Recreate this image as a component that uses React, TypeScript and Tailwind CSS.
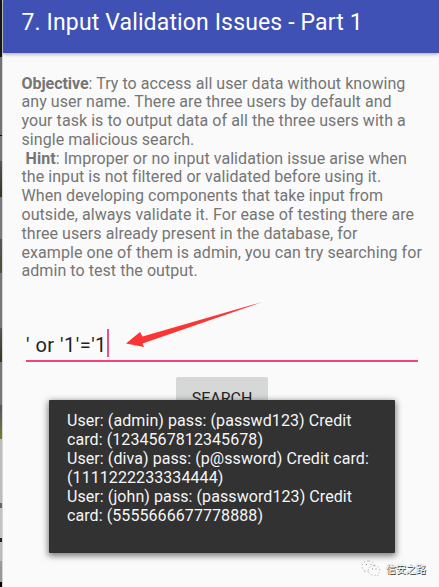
const objective = [
  'any user name. There are three users by default and',
  'your task is to output data of all the three users with a',
  'single malicious search.',
];

const hint = [
  'the input is not filtered or validated before using it.',
  'When developing components that take input from',
  'outside, always validate it. For ease of testing there are',
  'three users already present in the database, for',
  'example one of them is admin, you can try searching for',
  'admin to test the output.',
];

const results = [
  'User: (admin) pass: (passwd123) Credit',
  'card: (1234567812345678)',
  'User: (diva) pass: (p@ssword) Credit card:',
  '(1111222233334444)',
  'User: (john) pass: (password123) Credit',
  'card: (5555666677778888)',
];

function EdgeStrip() {
  return (
    <div className="flex h-full w-[3px] shrink-0 flex-col border-r border-[#d5d5d8] bg-[#777]">
      <div className="h-[57px] bg-[#171719]" />
      <div className="h-[78px] bg-[#737375]" />
      <div className="h-px bg-black" />
      <div className="h-[25px] bg-[#777]" />
      <div className="h-[36px] bg-gradient-to-b from-[#555] to-[#35391f]" />
      <div className="h-[42px] bg-[#79797b]" />
      <div className="h-[34px] bg-gradient-to-b from-[#555] to-[#4c5130]" />
      <div className="h-[55px] bg-[#77777a]" />
      <div className="h-[34px] bg-gradient-to-b from-[#555] to-[#343b20]" />
      <div className="h-[43px] bg-[#77777a]" />
      <div className="h-[34px] bg-gradient-to-b from-[#555] to-[#6d8130]" />
      <div className="h-[64px] bg-[#bdbdbd]" />
      <div className="h-[5px] bg-[#666]" />
      <div className="h-[30px] bg-[#c4c4c4]" />
      <div className="h-[4px] bg-[#222]" />
      <div className="h-[19px] bg-[#bbb]" />
      <div className="h-[21px] bg-[#999]" />
      <div className="flex-1 bg-black" />
    </div>
  );
}

function Toast() {
  return (
    <div className="absolute left-[49px] top-[400px] h-[153px] w-[346px] rounded-[1px] bg-[#323232] pl-[18px] pt-[12px] text-[16px] leading-[18.9px] tracking-[0.08px] text-[#f6f6f6] shadow-[0_2px_6px_1px_rgba(0,0,0,0.5)]">
      {results.map((line) => (
        <div key={line} className="whitespace-nowrap">{line}</div>
      ))}
    </div>
  );
}

function Watermark() {
  return (
    <div className="absolute left-[361px] top-[560px] flex items-center gap-[5px]">
      <svg width="20" height="17" viewBox="0 0 20 17" fill="none" stroke="#aaa" strokeWidth="0.8" strokeDasharray="1.4 2">
        <path d="M7.5 1C3.8 1 1 3.3 1 6.2c0 1.7 1 3.1 2.4 4l-.7 2.1 2.4-1.2c.8.2 1.6.3 2.5.3" />
        <path d="M13.8 5.6C13.2 3 10.7 1 7.5 1" />
        <path d="M13 5.7c-3.2 0-5.8 2.1-5.8 4.8s2.6 4.8 5.8 4.8c.7 0 1.3-.1 1.9-.3l2 1-.5-1.8c1.5-.9 2.4-2.2 2.4-3.7 0-2.7-2.6-4.8-5.8-4.8Z" />
        <path d="M5 4.500h1M9.500 4.500h1M11 9h1M14.500 9h1" stroke="#666" strokeDasharray="none" />
      </svg>
      <span className="whitespace-nowrap font-['Noto_Sans_CJK_SC',sans-serif] text-[10px] leading-[15px] text-white [text-shadow:0.7px_0.7px_0_#333,0_0_1px_#888]">信安之路</span>
    </div>
  );
}

export default function App() {
  return (
    <div className="relative flex h-[587px] w-[439px] overflow-hidden bg-[#fafafa] font-[Roboto,sans-serif]">
      <EdgeStrip />
      <main className="flex min-w-0 flex-1 flex-col">
        <header className="flex h-[53px] shrink-0 items-start bg-[#3f51b5] pl-[18.5px] pt-[9px] shadow-[0_1px_4px_rgba(0,0,0,0.35)]">
          <h1 className="whitespace-nowrap text-[23px] leading-[28px] tracking-[0.14px] text-white">7. Input Validation Issues - Part 1</h1>
        </header>
        <section className="h-[212px] whitespace-nowrap pl-[18.5px] pt-[21.5px] text-[16px] leading-[18.8px] tracking-[0.06px] text-[#757575]">
          <div><b className="tracking-[-0.05px]">Objective</b>: Try to access all user data without knowing</div>
          {objective.map((line) => <div key={line}>{line}</div>)}
          <div className="whitespace-pre"> <b>Hint</b>: Improper or no input validation issue arise when</div>
          {hint.map((line) => <div key={line}>{line}</div>)}
        </section>
        <div className="ml-[23px] mt-[64px] flex h-[33px] w-[392px] shrink-0 items-start border-b-2 border-[#f0437f]">
          <span className="mt-[4px] whitespace-pre text-[20px] leading-[24px] tracking-[0.48px] text-[#212121]">' or '1'='1</span>
          <span className="h-[28px] w-[2px] bg-[#ee4f86]" />
        </div>
        <button className="ml-[173px] mt-[15px] flex h-[46px] w-[92px] shrink-0 justify-center rounded-[2px] bg-[#d6d7d7] pt-[12px] text-[16px] leading-[20px] text-[#252525]">SEARCH</button>
      </main>
      <svg className="absolute left-[126px] top-[301px]" width="138" height="48" viewBox="0 0 138 48">
        <path d="M0 42.500 14 31 16.500 35.500 136.500 1 16.500 42.500 18 46Z" fill="#fb3434" />
      </svg>
      <Toast />
      <Watermark />
    </div>
  );
}
